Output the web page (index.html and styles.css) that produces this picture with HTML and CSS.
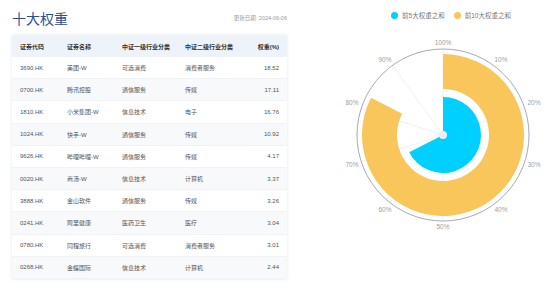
FILE: index.html
```html
<!DOCTYPE html>
<html lang="zh-CN">
<head>
    <meta charset="UTF-8">
    <title>十大权重</title>
    <link rel="stylesheet" href="styles.css">
</head>
<body>
    <div class="page">
        <div class="left">
            <div class="head">
                <h2>十大权重</h2>
                <span class="date">更新日期: 2024-06-06</span>
            </div>
            <table class="weights">
                <colgroup>
                    <col style="width:55px">
                    <col style="width:55px">
                    <col style="width:63px">
                    <col style="width:60px">
                    <col style="width:42px">
                </colgroup>
                <thead>
                    <tr><th>证券代码</th><th>证券名称</th><th>中证一级行业分类</th><th>中证二级行业分类</th><th class="num">权重(%)</th></tr>
                </thead>
                <tbody>
                    <tr><td>3690.HK</td><td>美团-W</td><td>可选消费</td><td>消费者服务</td><td class="num">18.52</td></tr>
                    <tr><td>0700.HK</td><td>腾讯控股</td><td>通信服务</td><td>传媒</td><td class="num">17.11</td></tr>
                    <tr><td>1810.HK</td><td>小米集团-W</td><td>信息技术</td><td>电子</td><td class="num">16.76</td></tr>
                    <tr><td>1024.HK</td><td>快手-W</td><td>通信服务</td><td>传媒</td><td class="num">10.92</td></tr>
                    <tr><td>9626.HK</td><td>哔哩哔哩-W</td><td>通信服务</td><td>传媒</td><td class="num">4.17</td></tr>
                    <tr><td>0020.HK</td><td>商汤-W</td><td>信息技术</td><td>计算机</td><td class="num">3.37</td></tr>
                    <tr><td>3888.HK</td><td>金山软件</td><td>通信服务</td><td>传媒</td><td class="num">3.26</td></tr>
                    <tr><td>0241.HK</td><td>阿里健康</td><td>医药卫生</td><td>医疗</td><td class="num">3.04</td></tr>
                    <tr><td>0780.HK</td><td>同程旅行</td><td>可选消费</td><td>消费者服务</td><td class="num">3.01</td></tr>
                    <tr><td>0268.HK</td><td>金蝶国际</td><td>信息技术</td><td>计算机</td><td class="num">2.44</td></tr>
                </tbody>
            </table>
        </div>

        <div class="right">
            <div class="legend">
                <span class="item"><i class="dot blue"></i>前5大权重之和</span>
                <span class="item"><i class="dot yellow"></i>前10大权重之和</span>
            </div>
            <svg class="chart" width="250" height="258" viewBox="0 0 250 258">
                <g stroke="#ececec" stroke-width="0.8">
                    <line x1="143" y1="105" x2="143" y2="19"/>
                    <line x1="143" y1="105" x2="193.5" y2="35.4"/>
                    <line x1="143" y1="105" x2="224.8" y2="78.4"/>
                    <line x1="143" y1="105" x2="224.8" y2="131.6"/>
                    <line x1="143" y1="105" x2="193.5" y2="174.6"/>
                    <line x1="143" y1="105" x2="143" y2="191"/>
                    <line x1="143" y1="105" x2="92.5" y2="174.6"/>
                    <line x1="143" y1="105" x2="61.2" y2="131.6"/>
                    <line x1="143" y1="105" x2="61.2" y2="78.4"/>
                    <line x1="143" y1="105" x2="92.5" y2="35.4"/>
                </g>
                <circle cx="143" cy="105" r="86" fill="none" stroke="#a7a8b8" stroke-width="1"/>
                <path d="M143,24 A81,81 0 1 1 71.06,67.77 L102.14,83.86 A46,46 0 1 0 143,59 Z" fill="#f8c65a"/>
                <path d="M143,105 L143,67 A38,38 0 1 1 109.16,122.29 Z" fill="#00d0ff"/>
                <g stroke="#f4f4f4" stroke-width="0.6">
                    <line x1="143" y1="59" x2="143" y2="67"/>
                    <line x1="170" y1="67.8" x2="165.3" y2="74.3"/>
                    <line x1="143" y1="143" x2="143" y2="151"/>
                </g>
                <circle cx="143" cy="105" r="4" fill="#eeeeee"/>
                <g class="ticks">
                    <text x="143" y="13">100%</text>
                    <text x="201" y="30">10%</text>
                    <text x="234" y="73">20%</text>
                    <text x="234" y="135">30%</text>
                    <text x="201" y="180">40%</text>
                    <text x="143" y="197">50%</text>
                    <text x="85" y="180">60%</text>
                    <text x="52" y="135">70%</text>
                    <text x="52" y="73">80%</text>
                    <text x="85" y="30">90%</text>
                </g>
            </svg>
        </div>
    </div>
</body>
</html>
```

FILE: styles.css
```css
body {
    margin: 0;
    background: #fff;
    font-family: "Liberation Sans", "Noto Sans CJK SC", sans-serif;
}

.page {
    display: flex;
    width: 550px;
    height: 288px;
}

.left {
    width: 275px;
    padding-left: 12px;
}

.head {
    display: flex;
    justify-content: space-between;
    align-items: center;
    height: 35px;
}

.head h2 {
    margin: 0;
    font-size: 14px;
    font-weight: 400;
    color: #2f4f95;
    font-family: "Noto Sans CJK SC", sans-serif;
}

.date {
    font-size: 5.5px;
    color: #9a9a9a;
}

.weights {
    width: 275px;
    table-layout: fixed;
    border-collapse: collapse;
    box-shadow: 0 0 3px rgba(40, 60, 100, 0.12);
    font-size: 6px;
}

.weights th {
    height: 22px;
    background-color: #eef3fa;
    color: #333;
    font-weight: 700;
    text-align: left;
    padding: 0;
}

.weights td {
    height: 21.2px;
    color: #555;
    padding: 0;
    border-bottom: 1px solid #f0f2f5;
}

.weights th:first-child,
.weights td:first-child {
    padding-left: 8px;
}

.weights .num {
    text-align: right;
    padding-right: 8px;
}

.weights tbody tr:nth-child(even) {
    background-color: #f8f9fb;
}

.right {
    width: 250px;
    margin-left: 13px;
}

.legend {
    display: flex;
    justify-content: center;
    align-items: center;
    gap: 9px;
    height: 30px;
    padding-left: 52px;
    font-size: 6.5px;
    color: #777;
}

.legend .item {
    display: flex;
    align-items: center;
    gap: 4px;
}

.dot {
    width: 7px;
    height: 7px;
    border-radius: 50%;
}

.dot.blue {
    background-color: #00d0ff;
}

.dot.yellow {
    background-color: #f8c65a;
}

.chart {
    display: block;
}

.ticks text {
    font-size: 6.5px;
    fill: #a0a0a0;
    text-anchor: middle;
    dominant-baseline: middle;
}
```
